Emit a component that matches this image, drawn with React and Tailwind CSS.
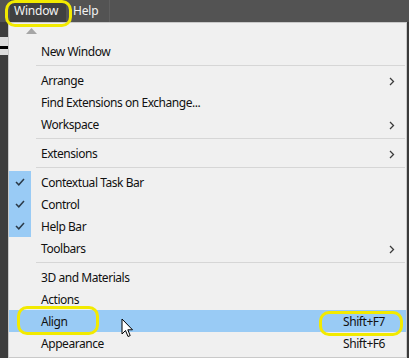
import React from 'react'

const font = { fontFamily: '"Noto Sans", "Liberation Sans", sans-serif' }

function Chevron() {
  return (
    <svg width="6" height="9" viewBox="0 0 6 9" className="text-[#3c3c3c]">
      <polyline points="1,1 4.5,4.5 1,8" fill="none" stroke="currentColor" strokeWidth="1.3" />
    </svg>
  )
}

function Check() {
  return (
    <svg width="10" height="8" viewBox="0 0 10 8">
      <polyline points="1,4 3.8,6.8 9,1" fill="none" stroke="#2b3a48" strokeWidth="1.5" />
    </svg>
  )
}

function Row({ label, sub, shortcut, checked, active }) {
  return (
    <div className={`flex h-[22px] items-center ${active ? 'bg-[#99cbf5]' : ''}`}>
      <div className={`flex h-full w-[22px] shrink-0 items-center justify-center ${checked ? 'bg-[#99cbf5]' : ''}`}>
        {checked && <Check />}
      </div>
      <span className="ml-[10px] mt-[2px] flex-1 text-[12px] tracking-[-0.45px] text-[#111]">{label}</span>
      {shortcut && <span className="mr-[21px] mt-[2px] text-[12px] tracking-[-0.45px] text-[#111]">{shortcut}</span>}
      {sub && (
        <span className="mr-[11px] mt-[2px] flex items-center">
          <Chevron />
        </span>
      )}
    </div>
  )
}

function Sep({ h }) {
  return (
    <div className={`flex items-center pl-[27px] pr-[1px] ${h}`}>
      <div className="h-px flex-1 bg-[#d6d6d6]" />
    </div>
  )
}

export default function App() {
  return (
    <div className="relative flex h-[358px] w-[409px] flex-col overflow-hidden bg-[#535353]" style={font}>
      <div className="flex h-[22px] shrink-0 items-center text-[12px] tracking-[-0.2px] text-[#f2f2f2]">
        <div className="ml-[10px] flex h-full w-[56px] items-center bg-[#404040] pl-[4px]">Window</div>
        <div className="ml-[7px]">Help</div>
        <div className="ml-[11px] h-full w-px bg-[#5f5f5f]" />
      </div>

      <div className="flex flex-1">
        <div className="flex w-[8px] flex-col bg-[#3d3d3d]">
          <div className="h-[15px]" />
          <div className="h-[9px] bg-[#dcdcdc]" />
          <div className="h-[3px] bg-black" />
          <div className="h-[6px] bg-[#dcdcdc]" />
        </div>
        <div className="flex flex-1 flex-col border border-[#c9c9c9] bg-[#f0f0f0]">
          <div className="flex h-[17px] items-center pl-[17px]">
            <svg width="11" height="6" viewBox="0 0 11 6" className="mb-[1px]">
              <polygon points="0,6 5.5,0 11,6" fill="#a6a6a6" />
            </svg>
          </div>
          <Row label="New Window" />
          <Sep h="h-[7px]" />
          <Row label="Arrange" sub />
          <Row label="Find Extensions on Exchange..." />
          <Row label="Workspace" sub />
          <Sep h="h-[7px]" />
          <Row label="Extensions" sub />
          <Sep h="h-[7px]" />
          <Row label="Contextual Task Bar" checked />
          <Row label="Control" checked />
          <Row label="Help Bar" checked />
          <Row label="Toolbars" sub />
          <Sep h="h-[7px]" />
          <Row label="3D and Materials" />
          <Row label="Actions" />
          <Row label="Align" shortcut="Shift+F7" active />
          <Row label="Appearance" shortcut="Shift+F6" />
        </div>
        <div className="w-[2px] bg-[#3a3a3a]" />
      </div>

      <div className="absolute left-[5px] top-[0px] h-[27px] w-[67px] rounded-[10px] border-[3px] border-[#f2ea00]" />
      <div className="absolute left-[17px] top-[306px] h-[29px] w-[82px] rounded-[10px] border-[3px] border-[#f2ea00]" />
      <div className="absolute left-[319px] top-[311px] h-[25px] w-[84px] rounded-[10px] border-[3px] border-[#f2ea00]" />

      <svg className="absolute left-[121px] top-[318px]" width="14" height="22" viewBox="0 0 14 22">
        <path d="M1 1 L1 16 L4.5 12.5 L7 18.5 L9.2 17.6 L6.8 11.8 L11.5 11.8 Z" fill="#fff" stroke="#000" strokeWidth="1" strokeLinejoin="round" />
      </svg>
    </div>
  )
}
